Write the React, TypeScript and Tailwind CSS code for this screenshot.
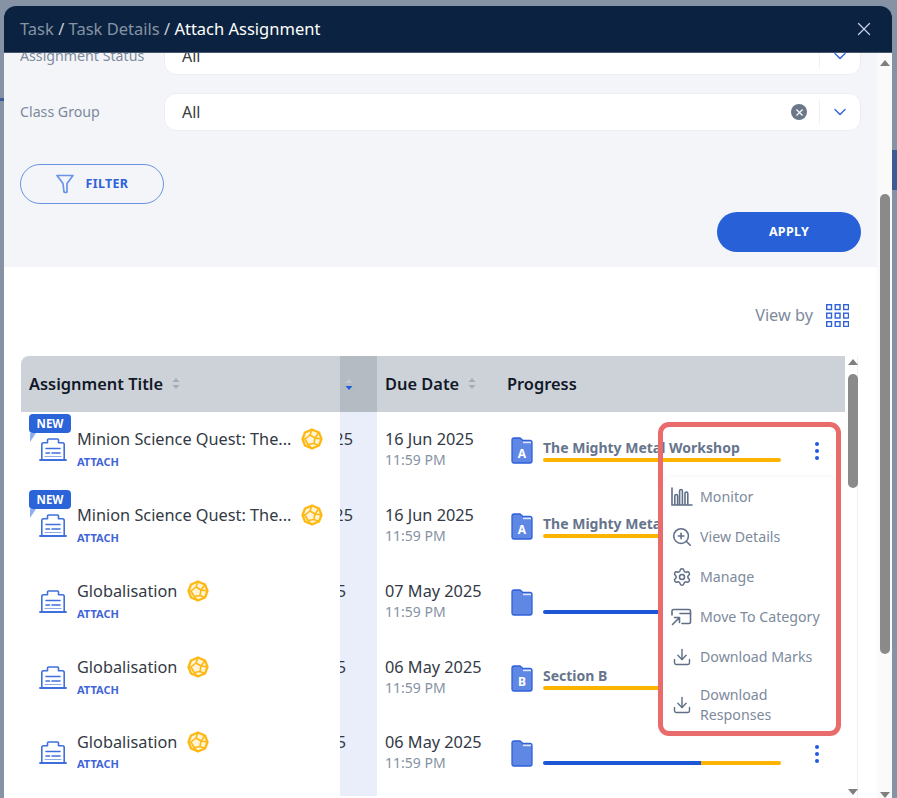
import { ChevronDown, Download, Settings, X, ZoomIn } from "lucide-react";

interface Row {
  title: string;
  isNew?: boolean;
  date: string;
  clipPad: string;
  section?: string;
  letter?: string;
  blue: number;
  yellow: number;
  rowH: string;
}

const ROWS: Row[] = [
  { title: "Minion Science Quest: The...", isNew: true, date: "16 Jun 2025", clipPad: "pr-[24px]", section: "The Mighty Metal Workshop", letter: "A", blue: 0, yellow: 238, rowH: "h-[76px]" },
  { title: "Minion Science Quest: The...", isNew: true, date: "16 Jun 2025", clipPad: "pr-[24px]", section: "The Mighty Metal Workshop", letter: "A", blue: 0, yellow: 238, rowH: "h-[76px]" },
  { title: "Globalisation", date: "07 May 2025", clipPad: "pr-[31px]", blue: 238, yellow: 0, rowH: "h-[76px]" },
  { title: "Globalisation", date: "06 May 2025", clipPad: "pr-[31px]", section: "Section B", letter: "B", blue: 0, yellow: 238, rowH: "h-[75px]" },
  { title: "Globalisation", date: "06 May 2025", clipPad: "pr-[31px]", blue: 158, yellow: 80, rowH: "h-[81px]" },
];

const MENU = ["Monitor", "View Details", "Manage", "Move To Category", "Download Marks"];

function SortIcon({ active }: { active?: boolean }) {
  return (
    <svg width="8" height="13" viewBox="0 0 8 13" className="shrink-0">
      <path d="M4 1 L7.5 5 H0.5 Z" fill={active ? "#c3cad3" : "#a4abb5"} />
      <path d="M4 12 L7.5 8 H0.5 Z" fill={active ? "#1f5bdc" : "#a4abb5"} />
    </svg>
  );
}

function AssignmentIcon() {
  return (
    <svg width="28" height="24" viewBox="0 0 28 24" fill="none" stroke="#3f6fdc" strokeWidth="1.6" className="shrink-0">
      <path d="M2.8 21.5 V6.5 Q2.8 4.8 4.5 4.8 H8.5 V2 Q8.5 1 9.5 1 H18.5 Q19.5 1 19.5 2 V4.8 H23.5 Q25.2 4.8 25.2 6.5 V21.5" strokeLinejoin="round" />
      <path d="M1 22 H27" strokeLinecap="round" strokeWidth="1.8" />
      <path d="M7 10.5 H21 M7 15 H10.5 M13 15 H21" strokeLinecap="round" />
      <path d="M6 18.5 H22" strokeLinecap="round" strokeWidth="1" opacity="0.6" />
    </svg>
  );
}

function GemIcon() {
  return (
    <svg width="22" height="22" viewBox="0 0 22 22" fill="#fff4d6" stroke="#fdb813" strokeWidth="2.3" strokeLinejoin="round" className="shrink-0">
      <path d="M11 1.5 L18 4.5 L20.5 11 L18 17.5 L11 20.5 L4 17.5 L1.5 11 L4 4.5 Z" />
      <path d="M11 1.5 L9 7 L14 10 L18 4.5 M9 7 L4 11 L7 16.5 L13 15.5 L14 10 M13 15.5 L18 17.5 M7 16.5 L11 20.5 M4 11 L1.5 11 M14 10 L20.5 11" fill="none" strokeWidth="1.6" />
    </svg>
  );
}

function FolderIcon({ letter }: { letter?: string }) {
  return (
    <svg width="22" height="27" viewBox="0 0 22 27" className="shrink-0">
      <path d="M1 3 Q1 1 3 1 H9 L12 3.5 H19 Q21 3.5 21 5.5 V24 Q21 26 19 26 H3 Q1 26 1 24 Z" fill="#5f87e4" stroke="#2f62d8" strokeWidth="1.3" />
      <rect x="12" y="4.6" width="8" height="1.6" fill="#dfe7fa" />
      {letter && (
        <text x="11" y="21" textAnchor="middle" fontSize="12" fontWeight="700" fill="#ffffff" fontFamily="Noto Sans, sans-serif">
          {letter}
        </text>
      )}
    </svg>
  );
}

function Kebab() {
  return (
    <div className="flex flex-col gap-[3px]">
      <span className="h-[4px] w-[4px] rounded-full bg-[#1f5bdc]" />
      <span className="h-[4px] w-[4px] rounded-full bg-[#1f5bdc]" />
      <span className="h-[4px] w-[4px] rounded-full bg-[#1f5bdc]" />
    </div>
  );
}

function MonitorIcon() {
  return (
    <svg width="22" height="20" viewBox="0 0 22 20" fill="none" stroke="#5f6f86" strokeWidth="1.6" className="shrink-0">
      <path d="M1 1 V18 H21" strokeLinecap="round" />
      <path d="M3.8 18 V9 Q3.8 7.5 5.2 7.5 Q6.6 7.5 6.6 9 V18 M8.6 18 V4 Q8.6 2.5 10 2.5 Q11.4 2.5 11.4 4 V18 M14 18 V6.5 Q14 5 15.4 5 Q16.8 5 16.8 6.5 V18" />
    </svg>
  );
}

function MoveIcon() {
  return (
    <svg width="21" height="18" viewBox="0 0 21 18" fill="none" stroke="#5f6f86" strokeWidth="1.6" strokeLinecap="round" strokeLinejoin="round" className="shrink-0">
      <path d="M1 7 V3 Q1 1.5 2.5 1.5 H18 Q19.5 1.5 19.5 3 V14 Q19.5 15.5 18 15.5 H11" />
      <path d="M9 5.5 H19.5" />
      <path d="M1.5 16.5 L8 10 M3.5 9.5 H8.5 V14.5" />
    </svg>
  );
}

function MenuIcon({ label }: { label: string }) {
  if (label === "Monitor") return <MonitorIcon />;
  if (label === "View Details") return <ZoomIn size={22} strokeWidth={1.7} className="shrink-0 text-[#5f6f86]" />;
  if (label === "Manage") return <Settings size={20} strokeWidth={1.8} className="shrink-0 text-[#5f6f86]" />;
  if (label === "Move To Category") return <MoveIcon />;
  return <Download size={20} strokeWidth={1.7} className="shrink-0 text-[#5f6f86]" />;
}

function Select({ clearable }: { clearable?: boolean }) {
  return (
    <div className="flex h-[38px] flex-1 items-center rounded-xl border border-[#eceef3] bg-white pl-[17px]">
      <span className="flex-1 text-base text-[#3a3a3a]">All</span>
      {clearable && (
        <span className="mr-[12px] flex h-4 w-4 items-center justify-center rounded-full bg-[#6b7889]">
          <X size={11} strokeWidth={2.5} className="text-white" />
        </span>
      )}
      <span className="h-[26px] w-px bg-[#f0f1f4]" />
      <ChevronDown size={20} strokeWidth={1.6} className="mx-[10px] text-[#2f62d8]" />
    </div>
  );
}

export default function App() {
  return (
    <div className="relative h-[798px] w-[897px] overflow-hidden bg-[#8593a5] pl-1 pt-1.5 font-['Noto_Sans',sans-serif]">
      <div className="absolute left-0 top-[98px] h-[3px] w-[4px] bg-[#3d5c94]" />
      <div className="absolute right-0 top-[150px] h-[40px] w-[5px] bg-[#3d5c94]" />

      <div className="w-[888px]">
        <div className="flex h-[47px] items-center justify-between rounded-t-xl border-b border-[#46566c] bg-[#0b2340] pl-4 pr-[17px]">
          <div className="text-[16.5px] text-[#8593a5]">
            Task <span className="text-[#c8d0da]">/</span> Task Details <span className="text-[#c8d0da]">/</span>{" "}
            <span className="text-white">Attach Assignment</span>
          </div>
          <X size={22} strokeWidth={1.4} className="text-[#c3d0ea]" />
        </div>

        <div className="flex h-[745px] overflow-hidden bg-white">
          <div className="w-[873px] shrink-0">
            <div className="h-[214px] overflow-hidden bg-[#f3f5f9] pl-4 pr-4">
              <div className="-mt-[16px] flex items-center">
                <span className="w-[144px] shrink-0 text-[14.2px] text-[#7d8a9c]">Assignment Status</span>
                <Select />
              </div>
              <div className="mt-[18px] flex items-center">
                <span className="w-[144px] shrink-0 text-[14.2px] text-[#7d8a9c]">Class Group</span>
                <Select clearable />
              </div>
              <button className="mt-[33px] flex h-[40px] w-[144px] items-center justify-center gap-[12px] rounded-full border-[1.5px] border-[#6a93e6] text-[12.5px] font-bold tracking-wide text-[#2f62d8]">
                <svg width="18" height="20" viewBox="0 0 18 20" fill="none" stroke="#6a93e6" strokeWidth="1.7" strokeLinejoin="round">
                  <path d="M1 1.5 H17 L11 9.5 V18 Q9.5 19 8 18 L7 9.5 Z" />
                </svg>
                <span className="pt-px">FILTER</span>
              </button>
              <div className="mt-2 flex justify-end">
                <button className="h-[40px] w-[144px] rounded-full bg-[#2860d8] pt-px text-[12.5px] font-bold tracking-wide text-white">
                  APPLY
                </button>
              </div>
            </div>

            <div className="flex h-[89px] items-center justify-end gap-[13px] pt-[8px] pr-7">
              <span className="text-[16.3px] text-[#7d8a9c]">View by</span>
              <svg width="23" height="23" viewBox="0 0 23 23" fill="none" stroke="#2f62d8" strokeWidth="1.4">
                {[0, 8.5, 17].map((x) =>
                  [0, 8.5, 17].map((y) => <rect key={`${x}-${y}`} x={x + 0.7} y={y + 0.7} width="4.8" height="4.8" />),
                )}
              </svg>
            </div>

            <div className="ml-[17px] flex w-[837px]">
              <div className="w-[824px] shrink-0">
                <div className="flex h-[56px] items-center rounded-tl-lg bg-[#cdd2d9] text-[16.4px] font-semibold text-[#111827]">
                  <div className="flex w-[319px] items-center gap-[9px] pl-2">
                    Assignment Title <SortIcon />
                  </div>
                  <div className="flex h-full w-[37px] items-center bg-[#b4bbc3] pl-[5px]">
                    <SortIcon active />
                  </div>
                  <div className="flex w-[130px] items-center gap-[9px] pl-2">
                    Due Date <SortIcon />
                  </div>
                  <div>Progress</div>
                </div>

                {ROWS.map((r, i) => (
                  <div key={i} className={`relative flex ${r.rowH}`}>
                    {r.isNew && (
                      <div className="absolute left-2 top-[2px]">
                        <div className="flex h-[19px] w-[42px] items-center justify-center rounded-[4px] bg-[#2b63d9] text-[11.5px] font-bold text-white">
                          NEW
                        </div>
                        <div className="ml-px h-0 w-0 border-r-[6px] border-t-[9px] border-r-transparent border-t-[#8fb0ee]" />
                      </div>
                    )}
                    <div className="flex w-[319px] shrink-0 pl-[18px] pt-[15px]">
                      <div className="mr-[10px] mt-[11px] shrink-0">
                        <AssignmentIcon />
                      </div>
                      <div>
                        <div className="flex items-center gap-[10px]">
                          <span className="text-[16.3px] leading-6 text-[#333a45]">{r.title}</span>
                          <GemIcon />
                        </div>
                        <div className={`${i === 4 ? "mt-[2px]" : "mt-[3px]"} text-[11px] font-bold leading-4 text-[#3f65d9]`}>ATTACH</div>
                      </div>
                    </div>
                    <div className={`flex w-[37px] shrink-0 justify-end overflow-hidden bg-[#e9eefa] pt-[15px] text-[16.3px] leading-6 text-[#333a45] ${r.clipPad}`}>
                      <span className="shrink-0">2025</span>
                    </div>
                    <div className="w-[130px] shrink-0 pl-2 pt-[15px]">
                      <div className="text-[16.3px] leading-6 text-[#333a45]">{r.date}</div>
                      <div className="-mt-[1px] text-sm leading-5 text-[#8592a3]">11:59 PM</div>
                    </div>
                    <div className="flex flex-1 pl-1 pt-[25px]">
                      <FolderIcon letter={r.letter} />
                      <div className="ml-[10px] w-[238px] shrink-0">
                        <div className="h-[21px] whitespace-nowrap text-sm font-bold leading-[22px] text-[#66758c]">{r.section}</div>
                        <div className="flex h-[4px] overflow-hidden rounded-full">
                          {r.blue > 0 && <div className="h-full bg-[#1d57d6]" style={{ width: r.blue }} />}
                          {r.yellow > 0 && <div className="h-full bg-[#fdb400]" style={{ width: r.yellow }} />}
                        </div>
                      </div>
                      <div className="ml-[34px] mt-[5px]">
                        <Kebab />
                      </div>
                    </div>
                  </div>
                ))}
              </div>

              <div className="flex h-[442px] w-[13px] shrink-0 flex-col items-center border-r border-[#f0f0f0] pl-[3px]">
                <svg width="10" height="6" viewBox="0 0 10 6" className="mt-[3px]">
                  <path d="M5 0 L10 6 H0 Z" fill="#7f7f7f" />
                </svg>
                <div className="mt-[9px] h-[114px] w-[10px] rounded-full bg-[#8a8a8a]" />
                <svg width="10" height="6" viewBox="0 0 10 6" className="mt-auto mb-[3px]">
                  <path d="M5 6 L10 0 H0 Z" fill="#7f7f7f" />
                </svg>
              </div>
            </div>
          </div>

          <div className="flex w-[15px] shrink-0 flex-col items-center bg-[#fafafa]">
            <svg width="10" height="6" viewBox="0 0 10 6" className="mt-[7px]">
              <path d="M5 0 L10 6 H0 Z" fill="#7f7f7f" />
            </svg>
            <div className="mt-[128px] h-[460px] w-[10px] rounded-full bg-[#8a8a8a]" />
            <svg width="10" height="6" viewBox="0 0 10 6" className="mt-[138px]">
              <path d="M5 6 L10 0 H0 Z" fill="#7f7f7f" />
            </svg>
          </div>
        </div>
      </div>

      {/* context menu opened from the first row */}
      <div className="absolute left-[663px] top-[477px] h-[255px] w-[173px] rounded-lg bg-white shadow-[0_1px_6px_rgba(0,0,0,0.08)]">
        {MENU.map((m) => (
          <div key={m} className="flex h-10 items-center">
            <div className="flex w-[37px] shrink-0 justify-center">
              <MenuIcon label={m} />
            </div>
            <span className="text-[14.2px] text-[#7d8a9c]">{m}</span>
          </div>
        ))}
        <div className="flex items-center pt-[8px]">
          <div className="flex w-[37px] shrink-0 justify-center">
            <Download size={20} strokeWidth={1.7} className="text-[#5f6f86]" />
          </div>
          <span className="text-[14.2px] leading-5 text-[#7d8a9c]">
            Download
            <br />
            Responses
          </span>
        </div>
      </div>

      {/* red highlight drawn on top of the screenshot */}
      <div className="absolute left-[658px] top-[422px] h-[314px] w-[183px] rounded-[11px] border-[5px] border-[#e96b6b]" />
    </div>
  );
}
